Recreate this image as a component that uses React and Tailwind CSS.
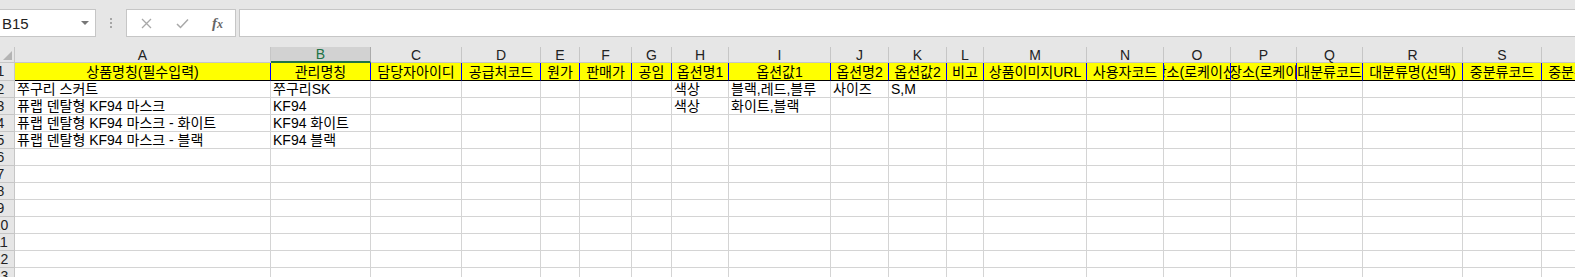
import React from "react";

const FONT = { fontFamily: '"Liberation Sans", "Noto Sans CJK KR", sans-serif' };

const cols = [
  { k: "A", w: 256, h: "상품명칭(필수입력)" },
  { k: "B", w: 100, h: "관리명칭", sel: true },
  { k: "C", w: 91, h: "담당자아이디" },
  { k: "D", w: 79, h: "공급처코드" },
  { k: "E", w: 39, h: "원가" },
  { k: "F", w: 52, h: "판매가" },
  { k: "G", w: 40, h: "공임" },
  { k: "H", w: 57, h: "옵션명1" },
  { k: "I", w: 102, h: "옵션값1" },
  { k: "J", w: 58, h: "옵션명2" },
  { k: "K", w: 58, h: "옵션값2" },
  { k: "L", w: 37, h: "비고" },
  { k: "M", w: 103, h: "상품이미지URL" },
  { k: "N", w: 77, h: "사용자코드" },
  { k: "O", w: 67, h: "장소(로케이션)" },
  { k: "P", w: 66, h: "장소(로케이션)", left: true },
  { k: "Q", w: 66, h: "대분류코드" },
  { k: "R", w: 100, h: "대분류명(선택)" },
  { k: "S", w: 79, h: "중분류코드" },
  { k: "T", w: 100, h: "중분류명(선택)" },
];

const data = [
  { A: "쭈구리 스커트", B: "쭈구리SK", H: "색상", I: "블랙,레드,블루", J: "사이즈", K: "S,M" },
  { A: "퓨랩 덴탈형 KF94 마스크", B: "KF94", H: "색상", I: "화이트,블랙" },
  { A: "퓨랩 덴탈형 KF94 마스크 - 화이트", B: "KF94 화이트" },
  { A: "퓨랩 덴탈형 KF94 마스크 - 블랙", B: "KF94 블랙" },
  {}, {}, {}, {}, {}, {}, {}, {},
];

function RowHead({ n, h }) {
  return (
    <div
      className={`shrink-0 w-[15px] ${h} overflow-hidden bg-[#e6e6e6] border-r border-b border-[#c6c6c6] flex justify-center`}
    >
      <div className="w-[28px] shrink-0 ml-[-13px] text-center text-[14px] leading-[17px] text-[#222]">{n}</div>
    </div>
  );
}

function FormulaBar() {
  return (
    <div className="h-[47px] bg-[#e6e6e6] pt-[9px] flex items-start">
      <div className="h-[28px] w-[96px] bg-white border border-l-0 border-[#c6c6c6] flex items-center justify-between pr-[6px]">
        <span className="text-[15px] text-[#222] pl-[2px] leading-none">B15</span>
        <svg width="8" height="5" viewBox="0 0 8 5"><path d="M0 0h8L4 4z" fill="#777" /></svg>
      </div>
      <div className="w-[30px] h-[28px] flex flex-col items-center justify-center gap-[2px]">
        <span className="w-[2px] h-[2px] bg-[#a6a6a6]" />
        <span className="w-[2px] h-[2px] bg-[#a6a6a6]" />
        <span className="w-[2px] h-[2px] bg-[#a6a6a6]" />
      </div>
      <div className="h-[28px] w-[110px] bg-white border border-[#c6c6c6] flex items-center">
        <div className="w-[38px] flex justify-center">
          <svg width="11" height="11" viewBox="0 0 11 11"><path d="M1 1l9 9M10 1l-9 9" stroke="#a8a8a8" strokeWidth="1.3" /></svg>
        </div>
        <div className="w-[35px] flex justify-center">
          <svg width="13" height="11" viewBox="0 0 13 11"><path d="M1 6l3.5 3.5L12 1.5" stroke="#a8a8a8" strokeWidth="1.5" fill="none" /></svg>
        </div>
        <div className="w-[35px] flex justify-center">
          <span className="italic font-bold text-[15px] text-[#666] leading-none" style={{ fontFamily: '"Liberation Serif", serif' }}>
            f<span className="text-[12px]">x</span>
          </span>
        </div>
      </div>
      <div className="ml-[3px] h-[28px] flex-1 bg-white border border-r-0 border-[#c6c6c6]" />
    </div>
  );
}

export default function App() {
  return (
    <div className="w-[1575px] h-[277px] overflow-hidden bg-white" style={FONT}>
      <FormulaBar />

      {/* column letters */}
      <div className="flex h-[16px]">
        <div className="shrink-0 w-[15px] h-[16px] bg-[#e6e6e6] border-r border-b border-[#c6c6c6] relative">
          <svg className="absolute right-[2px] bottom-[2px]" width="9" height="9" viewBox="0 0 9 9"><path d="M9 0v9H0z" fill="#b4b4b4" /></svg>
        </div>
        {cols.map((c) => (
          <div
            key={c.k}
            style={{ width: c.w }}
            className={`shrink-0 h-[16px] flex items-center justify-center text-[14px] leading-none border-r ${
              c.sel
                ? "bg-[#d2d2d2] text-[#217346] border-[#ababab] border-b-2 border-b-[#217346]"
                : "bg-[#e6e6e6] text-[#222] border-[#c6c6c6] border-b border-b-[#c6c6c6]"
            }`}
          >
            {c.k}
          </div>
        ))}
      </div>

      {/* row 1 headers */}
      <div className="flex h-[18px]">
        <RowHead n={1} h="h-[18px]" />
        {cols.map((c) => (
          <div
            key={c.k}
            style={{ width: c.w }}
            className={`shrink-0 h-[18px] bg-[#ffff00] border-r border-r-[#0000ff] border-b border-b-black overflow-hidden flex items-center ${
              c.left ? "justify-start" : "justify-center"
            }`}
          >
            <span className={`whitespace-nowrap shrink-0 text-[14px] leading-[16px] text-black ${c.left ? "ml-[-2px]" : ""}`}>
              {c.h}
            </span>
          </div>
        ))}
      </div>

      {data.map((r, i) => (
        <div key={i} className="flex h-[17px]">
          <RowHead n={i + 2} h="h-[17px]" />
          {cols.map((c) => (
            <div
              key={c.k}
              style={{ width: c.w }}
              className="shrink-0 h-[17px] border-r border-b border-[#d4d4d4] overflow-hidden flex items-center pl-[2px]"
            >
              <span className="whitespace-nowrap text-[14px] leading-[16px] text-black">{r[c.k] || ""}</span>
            </div>
          ))}
        </div>
      ))}
    </div>
  );
}
